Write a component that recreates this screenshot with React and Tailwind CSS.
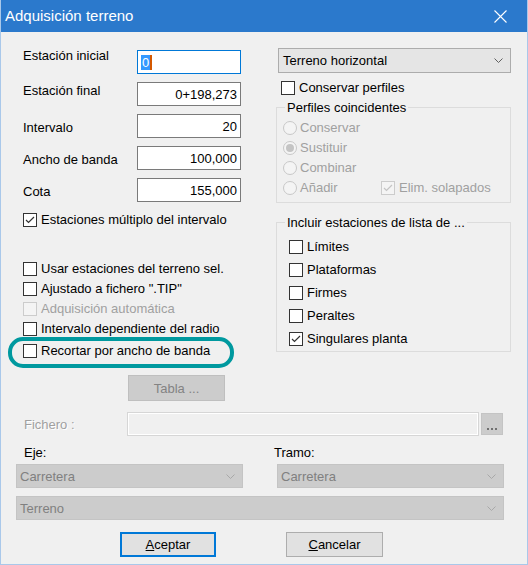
import React from 'react';

const font = { fontFamily: '"Liberation Sans", Arial, sans-serif' };

function Check({ checked, disabled }) {
  return (
    <span
      className={
        'flex h-[14px] w-[14px] shrink-0 items-center justify-center border ' +
        (disabled ? 'border-[#cccccc] bg-[#f4f4f4]' : 'border-[#333333] bg-white')
      }
    >
      {checked && (
        <svg width="10" height="8" viewBox="0 0 10 8">
          <polyline points="1,4 3.5,6.5 9,1" fill="none" stroke={disabled ? '#c4c4c4' : '#333333'} strokeWidth="1.2" />
        </svg>
      )}
    </span>
  );
}

function CheckRow({ label, checked, disabled, className = '' }) {
  return (
    <div className={'flex items-center gap-[4px] ' + className}>
      <Check checked={checked} disabled={disabled} />
      <span className={disabled ? 'text-[#a0a0a0]' : 'text-black'}>{label}</span>
    </div>
  );
}

function Radio({ label, selected }) {
  return (
    <div className="flex items-center gap-[3px]">
      <span className="flex h-[14px] w-[14px] items-center justify-center rounded-full border border-[#c8c8c8] bg-[#f4f4f4]">
        {selected && <span className="h-[8px] w-[8px] rounded-full bg-[#c4c4c4]" />}
      </span>
      <span className="text-[#a0a0a0]">{label}</span>
    </div>
  );
}

function Chevron({ color = '#606060' }) {
  return (
    <svg width="9" height="5" viewBox="0 0 9 5">
      <polyline points="0.5,0.5 4.5,4.5 8.5,0.5" fill="none" stroke={color} strokeWidth="1" />
    </svg>
  );
}

function DisabledSelect({ value, className = '' }) {
  return (
    <div className={'flex h-[24px] items-center justify-between border border-[#c4c4c4] bg-[#cccccc] pl-[3px] pr-[7px] text-[#808080] ' + className}>
      <span>{value}</span>
      <Chevron color="#a8a8a8" />
    </div>
  );
}

function Field({ label, value, focus, labelPad }) {
  return (
    <div className="flex items-start">
      <span className={'w-[114px] ' + labelPad}>{label}</span>
      <div
        className={
          'flex h-[24px] w-[104px] items-center border bg-white ' +
          (focus ? 'border-[#0078d7] pl-[3px]' : 'justify-end border-[#7a7a7a] pr-[3px]')
        }
      >
        {focus ? (
          <span className="flex items-center">
            <span className="bg-[#3399ff] px-[1px] text-white">0</span>
            <span className="h-[15px] w-[2px] bg-[#d45800]" />
          </span>
        ) : (
          <span>{value}</span>
        )}
      </div>
    </div>
  );
}

function Group({ legend, className = '', children }) {
  return (
    <fieldset className={'border border-[#dcdcdc] ' + className}>
      <legend className="ml-[8px] px-[2px]">{legend}</legend>
      {children}
    </fieldset>
  );
}

export default function App() {
  return (
    <div
      style={font}
      className="flex h-[565px] w-[528px] flex-col overflow-hidden border-x border-b border-[#a9c8ea] bg-[#f0f0f0] text-[13px] leading-[15px] text-black"
    >
      {/* Title bar */}
      <div className="-mx-px flex h-[32px] shrink-0 items-center justify-between bg-[#2b79cc] pl-[5px] pr-[21px] text-white">
        <span className="text-[15px] leading-[18px]">Adquisición terreno</span>
        <svg width="13" height="13" viewBox="0 0 13 13">
          <path d="M0.5 0.5 L12.5 12.5 M12.5 0.5 L0.5 12.5" stroke="white" strokeWidth="1.1" />
        </svg>
      </div>

      <div className="relative flex flex-1 flex-col">
        <div className="flex">
          {/* Left column */}
          <div className="ml-[22px] flex w-[240px] flex-col">
            <div className="mt-[18px] flex flex-col gap-[8px]">
              <Field label="Estación inicial" focus labelPad="-mt-[2px]" />
              <Field label="Estación final" value="0+198,273" labelPad="pt-[1px]" />
              <Field label="Intervalo" value="20" labelPad="pt-[6px]" />
              <Field label="Ancho de banda" value="100,000" labelPad="pt-[6px]" />
              <Field label="Cota" value="155,000" labelPad="pt-[6px]" />
            </div>
            <CheckRow className="mt-[10px]" label="Estaciones múltiplo del intervalo" checked />
            <div className="mt-[34px] flex flex-col gap-[5px]">
              <CheckRow label="Usar estaciones del terreno sel." />
              <CheckRow label={'Ajustado a fichero ".TIP"'} />
              <CheckRow label="Adquisición automática" disabled />
              <CheckRow label="Intervalo dependiente del radio" />
              <CheckRow className="mt-[2px]" label="Recortar por ancho de banda" />
            </div>
          </div>

          {/* Right column */}
          <div className="ml-[13px] flex w-[235px] flex-col">
            <div className="mt-[16px] ml-[2px] flex h-[25px] items-center justify-between border border-[#acacac] bg-[#e5e5e5] pl-[4px] pr-[7px]">
              <span>Terreno horizontal</span>
              <Chevron />
            </div>
            <CheckRow className="mt-[7px] ml-[5px]" label="Conservar perfiles" />
            <Group legend="Perfiles coincidentes" className="mt-[5px] h-[103px]">
              <div className="ml-[6px] mt-[5px] flex flex-col gap-[5px]">
                <Radio label="Conservar" />
                <Radio label="Sustituir" selected />
                <Radio label="Combinar" />
                <div className="flex items-center">
                  <div className="w-[98px]">
                    <Radio label="Añadir" />
                  </div>
                  <CheckRow label="Elim. solapados" checked disabled />
                </div>
              </div>
            </Group>
            <Group legend="Incluir estaciones de lista de ..." className="mt-[12px] h-[137px]">
              <div className="ml-[12px] mt-[9px] flex flex-col gap-[8px]">
                <CheckRow label="Límites" />
                <CheckRow label="Plataformas" />
                <CheckRow label="Firmes" />
                <CheckRow label="Peraltes" />
                <CheckRow label="Singulares planta" checked />
              </div>
            </Group>
          </div>
        </div>

        {/* Bottom section */}
        <div className="ml-[127px] mt-[17px] flex h-[26px] w-[97px] items-center justify-center border border-[#bfbfbf] bg-[#cccccc] text-[#838383]">
          Tabla ...
        </div>
        <div className="mt-[11px] flex items-center">
          <span className="ml-[23px] w-[103px] text-[#a0a0a0] [text-shadow:1px_1px_0_#ffffff]">Fichero :</span>
          <div className="h-[24px] w-[352px] border border-[#d6d6d6] shadow-[inset_0_0_0_1px_#ffffff]" />
          <div className="ml-[2px] flex h-[22px] w-[22px] items-end justify-center border border-[#c4c4c4] bg-[#cccccc] pb-[3px]">
            <svg width="11" height="3" viewBox="0 0 11 3">
              <rect x="0" y="0" width="2" height="2" fill="#707070" />
              <rect x="4" y="0" width="2" height="2" fill="#707070" />
              <rect x="8" y="0" width="2" height="2" fill="#707070" />
            </svg>
          </div>
        </div>
        <div className="mt-[9px] flex">
          <span className="ml-[23px] w-[250px]">Eje:</span>
          <span>Tramo:</span>
        </div>
        <div className="ml-[15px] mt-[4px] flex w-[488px] justify-between">
          <DisabledSelect value="Carretera" className="w-[227px]" />
          <DisabledSelect value="Carretera" className="w-[227px]" />
        </div>
        <DisabledSelect value="Terreno" className="ml-[15px] mt-[8px] w-[488px]" />
        <div className="mt-[12px] flex">
          <div className="ml-[119px] flex h-[25px] w-[96px] items-center justify-center border-2 border-[#0078d7] bg-[#e1e1e1]">
            <span><span className="underline">A</span>ceptar</span>
          </div>
          <div className="ml-[70px] flex h-[25px] w-[97px] items-center justify-center border border-[#adadad] bg-[#e1e1e1]">
            <span><span className="underline">C</span>ancelar</span>
          </div>
        </div>

        {/* Highlight annotation around "Recortar por ancho de banda" */}
        <div className="pointer-events-none absolute left-[7px] top-[305px] h-[31px] w-[226px] rounded-[15px] border-[4px] border-[#00999f]" />
      </div>
    </div>
  );
}
